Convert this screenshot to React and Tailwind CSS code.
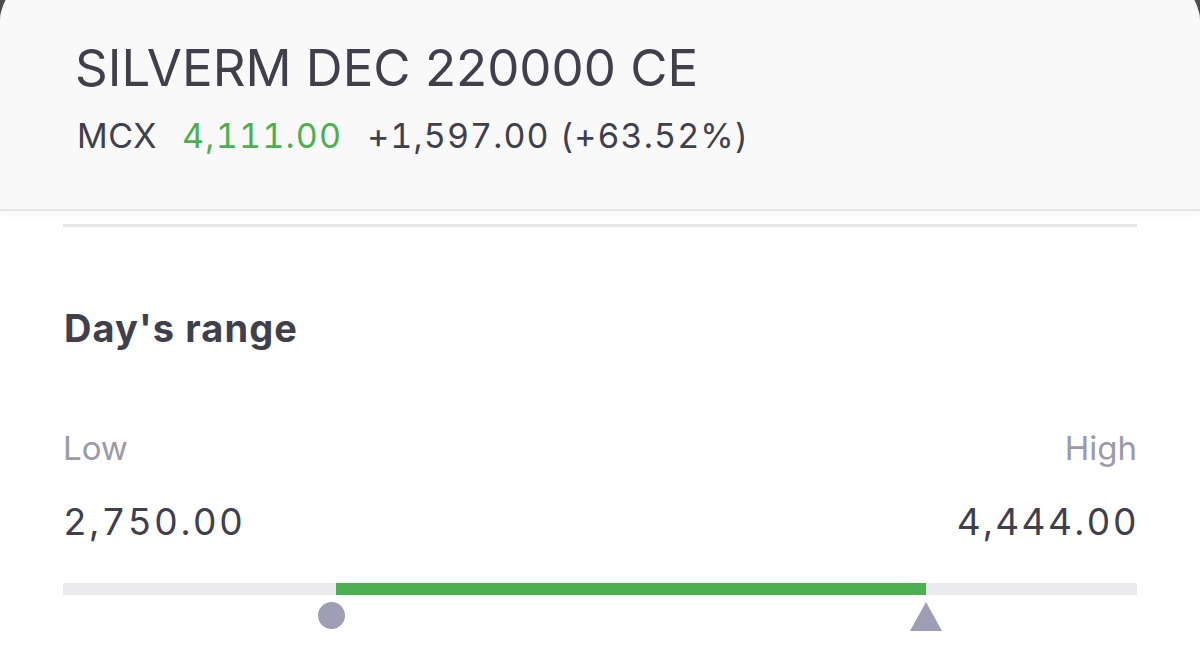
import React from "react";

const range = { low: 2750, high: 4444, open: 3180, ltp: 4111 };

const pct = (v) => ((v - range.low) / (range.high - range.low)) * 100;

const DayRangeBar = () => {
  const start = pct(range.open);
  const end = pct(range.ltp);

  return (
    <div className="relative mt-[43px] mx-[63px] h-[12px] bg-[#ebebed]">
      <div
        className="absolute top-0 h-full bg-[#4caf50]"
        style={{ left: `${start}%`, width: `${end - start}%` }}
      />
      {/* open marker */}
      <div
        className="absolute top-[19px] w-[27px] h-[27px] -ml-[18px] rounded-full bg-[#9e9eb4]"
        style={{ left: `${start}%` }}
      />
      {/* ltp marker */}
      <svg
        className="absolute top-[19px] -ml-[16px]"
        width="32"
        height="29"
        viewBox="0 0 32 29"
        style={{ left: `${end}%` }}
      >
        <polygon points="16,0 32,29 0,29" fill="#9e9eb4" />
      </svg>
    </div>
  );
};

export default function App() {
  return (
    <div className="w-[1200px] h-[648px] bg-[#4d4d4d] overflow-hidden font-['Inter',sans-serif]">
      <div className="-mt-[22px] h-[670px] rounded-t-[44px] bg-white overflow-hidden flex flex-col">
        {/* Header */}
        <div className="pt-[22px] h-[233px] shrink-0 bg-[#f9f9f9] border-b-2 border-[#e6e6ea] shadow-[0_4px_8px_rgba(0,0,0,0.03)]">
          <div className="pl-[75px] pt-[42px]">
            <h1 className="text-[51px] leading-none font-normal text-[#40404c]">
              SILVERM DEC 220000 CE
            </h1>
            <div className="mt-[26px] flex items-baseline text-[34px] leading-none text-[#40404c]">
              <span className="ml-[2px] tracking-[0.5px]">MCX</span>
              <span className="ml-[25px] tabular-nums tracking-[1.2px] text-[#4caf50]">
                4,111.00
              </span>
              <span className="ml-[25px] tabular-nums tracking-[1.1px]">
                +1,597.00 (+63.52%)
              </span>
            </div>
          </div>
        </div>

        {/* Separator */}
        <div className="mt-[13px] mx-[63px] h-[3px] bg-[#e6e6ea]" />

        {/* Day's range */}
        <h2 className="mt-[82px] ml-[64px] text-[38px] leading-none font-bold tracking-[1.1px] text-[#40404c]">
          Day's range
        </h2>

        <div className="mt-[85px] mx-[63px] flex justify-between text-[33px] leading-none text-[#9a9aa8]">
          <span>Low</span>
          <span>High</span>
        </div>

        <div className="mt-[38px] mx-[63px] flex justify-between text-[37px] leading-none tabular-nums tracking-[2.3px] text-[#40404c]">
          <span>2,750.00</span>
          <span className="-mr-[2px]">4,444.00</span>
        </div>

        <DayRangeBar />
      </div>
    </div>
  );
}
